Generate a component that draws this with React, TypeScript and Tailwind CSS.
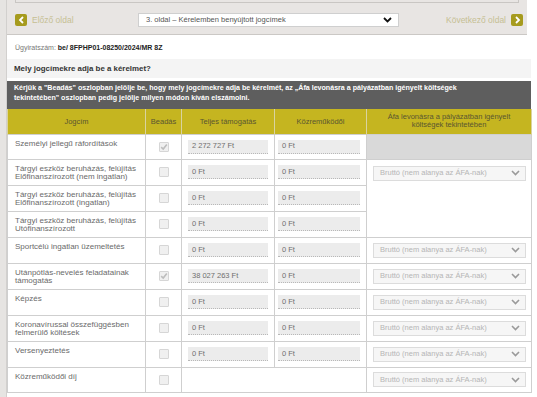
import React from 'react';

type Row = {
  label: string[];
  checked: boolean;
  full?: string;
  kozr?: string;
  afa: 'gray' | 'select' | 'span3' | 'none';
  merged?: boolean;
  h: number;
};

const rows: Row[] = [
  { label: ['Személyi jellegű ráfordítások'], checked: true, full: '2 272 727 Ft', kozr: '0 Ft', afa: 'gray', h: 25 },
  { label: ['Tárgyi eszköz beruházás, felújítás', 'Előfinanszírozott (nem ingatlan)'], checked: false, full: '0 Ft', kozr: '0 Ft', afa: 'span3', h: 26 },
  { label: ['Tárgyi eszköz beruházás, felújítás', 'Előfinanszírozott (ingatlan)'], checked: false, full: '0 Ft', kozr: '0 Ft', afa: 'none', h: 26 },
  { label: ['Tárgyi eszköz beruházás, felújítás', 'Utófinanszírozott'], checked: false, full: '0 Ft', kozr: '0 Ft', afa: 'none', h: 26 },
  { label: ['Sportcélú ingatlan üzemeltetés'], checked: false, full: '0 Ft', kozr: '0 Ft', afa: 'select', h: 26 },
  { label: ['Utánpótlás-nevelés feladatainak', 'támogatás'], checked: true, full: '38 027 263 Ft', kozr: '0 Ft', afa: 'select', h: 26 },
  { label: ['Képzés'], checked: false, full: '0 Ft', kozr: '0 Ft', afa: 'select', h: 26 },
  { label: ['Koronavírussal összefüggésben', 'felmerülő költések'], checked: false, full: '0 Ft', kozr: '0 Ft', afa: 'select', h: 26 },
  { label: ['Versenyeztetés'], checked: false, full: '0 Ft', kozr: '0 Ft', afa: 'select', h: 26 },
  { label: ['Közreműködői díj'], checked: false, afa: 'select', merged: true, h: 25 },
];

function Checkbox({ checked }: { checked: boolean }) {
  return (
    <div className="w-[10px] h-[10px] mx-auto border border-[#d6d6d6] bg-[#f0f0f0] rounded-[1px] flex items-center justify-center">
      {checked && (
        <svg width="8" height="8" viewBox="0 0 8 8">
          <path d="M1.2 4.2 L3.2 6 L6.8 1.6" fill="none" stroke="#bdbdbd" strokeWidth="1.6" />
        </svg>
      )}
    </div>
  );
}

function Amount({ value }: { value: string }) {
  return (
    <div className="h-[14px] bg-[#ececec] border-b border-dotted border-[#b8b8b8] px-[4px] flex items-center text-[7.5px] text-[#6f6f6f]">
      {value}
    </div>
  );
}

function AfaSelect() {
  return (
    <div className="h-[15px] bg-[#f6f6f6] border border-[#dcdcdc] pl-[6px] pr-[5px] flex items-center justify-between text-[7.5px] text-[#b5b5b5]">
      <span>Bruttó (nem alanya az ÁFA-nak)</span>
      <svg width="9" height="6" viewBox="0 0 9 6">
        <path d="M1 1 L4.5 4.5 L8 1" fill="none" stroke="#9a9a9a" strokeWidth="1.6" />
      </svg>
    </div>
  );
}

function NavIcon({ dir }: { dir: 'left' | 'right' }) {
  return (
    <div className="w-[12px] h-[12px] rounded-[2px] bg-[#a69b1e] flex items-center justify-center">
      <svg width="7" height="8" viewBox="0 0 7 8">
        <path d={dir === 'left' ? 'M5 1 L2 4 L5 7' : 'M2 1 L5 4 L2 7'} fill="none" stroke="#fff" strokeWidth="1.8" />
      </svg>
    </div>
  );
}

export default function App() {
  return (
    <div className="w-[537px] h-[397px] overflow-hidden bg-white flex" style={{ fontFamily: '"Liberation Sans", Arial, sans-serif' }}>
      <div className="w-[7px] shrink-0 bg-[#e6e4e2] border-r border-[#d2d0ce]" />
      <div className="w-[524px] shrink-0">
        {/* nav */}
        <div className="h-[35px] bg-[#e8e5e3] border-b border-[#cbc8c5] mr-[4px]">
          <div className="mx-[8px] h-[3px] border-b border-x border-[#c9c6c3]" />
          <div className="flex items-center pl-[8px] pr-[4px] pt-[10px]">
            <div className="flex items-center gap-[5px] w-[123px]">
              <NavIcon dir="left" />
              <span className="text-[8.5px] text-[#c6bf93]">Előző oldal</span>
            </div>
            <div className="w-[261px] h-[14px] bg-white border border-[#cfcfcf] flex items-center justify-between pl-[7px] pr-[6px] text-[7.5px] text-[#555]">
              <span>3. oldal – Kérelemben benyújtott jogcímek</span>
              <svg width="9" height="6" viewBox="0 0 9 6">
                <path d="M1 1 L4.5 4.5 L8 1" fill="none" stroke="#111" strokeWidth="1.8" />
              </svg>
            </div>
            <div className="flex-1 flex items-center justify-end gap-[5px]">
              <span className="text-[8.5px] text-[#c6bf93]">Következő oldal</span>
              <NavIcon dir="right" />
            </div>
          </div>
        </div>

        <div className="pl-[8px] pt-[8px] h-[24px] text-[7px] text-[#777]">
          Ügyiratszám: <span className="font-bold text-[#222]">be/ 8FPHP01-08250/2024/MR 8Z</span>
        </div>

        <div className="h-[19px] bg-[#f4f4f4] flex items-center pl-[7px] text-[7.9px] font-bold text-[#333]">
          Mely jogcímekre adja be a kérelmet?
        </div>

        <div className="mt-[3px] h-[28px] bg-[#5e5e5e] px-[7px] pt-[3px] text-[7.1px] leading-[9.5px] font-bold text-white">
          Kérjük a "Beadás" oszlopban jelölje be, hogy mely jogcímekre adja be kérelmét, az „Áfa levonásra a pályázatban igényelt költségek
          <br />
          tekintetében" oszlopban pedig jelölje milyen módon kíván elszámolni.
        </div>

        <table className="w-[524px] border-collapse table-fixed text-[8px] text-[#6a6a6a]">
          <colgroup>
            <col className="w-[138px]" />
            <col className="w-[36px]" />
            <col className="w-[93px]" />
            <col className="w-[92px]" />
            <col className="w-[165px]" />
          </colgroup>
          <thead>
            <tr className="h-[25px] bg-[#c5b520] text-[#5a5530] text-[7.5px]">
              <th className="font-normal border-x border-[#d9d3a0] leading-[9px]">Jogcím</th>
              <th className="font-normal border-x border-[#d9d3a0] leading-[9px]">Beadás</th>
              <th className="font-normal border-x border-[#d9d3a0] leading-[9px]">Teljes támogatás</th>
              <th className="font-normal border-x border-[#d9d3a0] leading-[9px]">Közreműködői</th>
              <th className="font-normal border-x border-[#d9d3a0] leading-[8.5px]">
                Áfa levonásra a pályázatban igényelt
                <br />
                költségek tekintetében
              </th>
            </tr>
          </thead>
          <tbody>
            {rows.map((r, i) => (
              <tr key={i} style={{ height: r.h }}>
                <td className="border border-[#cfcfcf] align-top pl-[7px] pt-[5px] leading-[8.5px] text-[#6a6a6a]">
                  {r.label.map((l, j) => (
                    <div key={j}>{l}</div>
                  ))}
                </td>
                <td className="border border-[#cfcfcf] align-middle">
                  <Checkbox checked={r.checked} />
                </td>
                {r.merged ? (
                  <td colSpan={2} className="border border-[#cfcfcf]" />
                ) : (
                  <>
                    <td className="border border-[#cfcfcf] align-middle pl-[6px] pr-[6px]">
                      <Amount value={r.full!} />
                    </td>
                    <td className="border border-[#cfcfcf] align-middle pl-[3px] pr-[6px]">
                      <Amount value={r.kozr!} />
                    </td>
                  </>
                )}
                {r.afa === 'gray' && <td className="border border-[#cfcfcf] bg-[#d9d9d9]" />}
                {r.afa === 'select' && (
                  <td className="border border-[#cfcfcf] align-middle pl-[6px] pr-[5px]">
                    <AfaSelect />
                  </td>
                )}
                {r.afa === 'span3' && (
                  <td rowSpan={3} className="border border-[#cfcfcf] align-top pl-[6px] pr-[5px] pt-[6px]">
                    <AfaSelect />
                  </td>
                )}
              </tr>
            ))}
          </tbody>
        </table>
      </div>
    </div>
  );
}
